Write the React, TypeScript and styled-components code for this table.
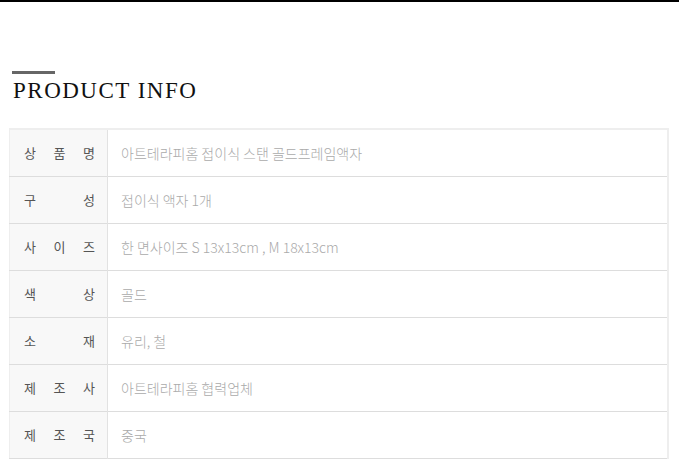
import * as React from 'react';
import styled, { createGlobalStyle } from 'styled-components';

const rows = [
  { label: ['상', '품', '명'], value: '아트테라피홈 접이식 스탠 골드프레임액자' },
  { label: ['구', '성'], value: '접이식 액자 1개' },
  { label: ['사', '이', '즈'], value: '한 면사이즈 S 13x13cm , M 18x13cm' },
  { label: ['색', '상'], value: '골드' },
  { label: ['소', '재'], value: '유리, 철' },
  { label: ['제', '조', '사'], value: '아트테라피홈 협력업체' },
  { label: ['제', '조', '국'], value: '중국' },
];

const App = (): JSX.Element => {
  return (
    <>
      <GlobalStyle />
      <Page>
        <TopLine />
        <TitleBlock>
          <TitleBar />
          <Title>PRODUCT INFO</Title>
        </TitleBlock>
        <InfoTable>
          <tbody>
            {rows.map((row, i) => (
              <Row key={i}>
                <Label>
                  <LabelInner>
                    {row.label.map((ch, j) => (
                      <span key={j}>{ch}</span>
                    ))}
                  </LabelInner>
                </Label>
                <Value>{row.value}</Value>
              </Row>
            ))}
          </tbody>
        </InfoTable>
      </Page>
    </>
  );
};

const GlobalStyle = createGlobalStyle`
  body {
    margin: 0;
    background: #fff;
    font-family: "Noto Sans CJK KR", "Noto Sans", sans-serif;
  }
`;

const Page = styled.div`
  width: 679px;
`;

const TopLine = styled.div`
  height: 2px;
  background: #000;
`;

const TitleBlock = styled.div`
  padding: 69px 0 0 12px;
`;

const TitleBar = styled.div`
  width: 43px;
  height: 3px;
  background: #666;
`;

const Title = styled.h2`
  margin: 3px 0 0 1px;
  font-family: "Liberation Serif", serif;
  font-weight: normal;
  font-size: 23px;
  line-height: 28px;
  letter-spacing: 1.5px;
  color: #111;
`;

const InfoTable = styled.table`
  margin: 23px 0 0 9px;
  width: 660px;
  border-collapse: collapse;
  border-top: 2px solid #eee;
  border-left: 1px solid #eee;
  border-right: 2px solid #eee;
`;

const Row = styled.tr`
  border-bottom: 1px solid #ddd;
`;

const Label = styled.td`
  width: 98px;
  height: 47px;
  padding: 0;
  background: #f8f8f8;
  border-right: 1px solid #e2e2e2;
  box-sizing: border-box;
`;

const LabelInner = styled.div`
  display: flex;
  justify-content: space-between;
  padding: 0 12px 0 14px;
  font-size: 13px;
  color: #555;
`;

const Value = styled.td`
  padding: 0 0 0 13px;
  font-size: 14px;
  font-weight: 300;
  color: #aaa;
`;

export default App;
